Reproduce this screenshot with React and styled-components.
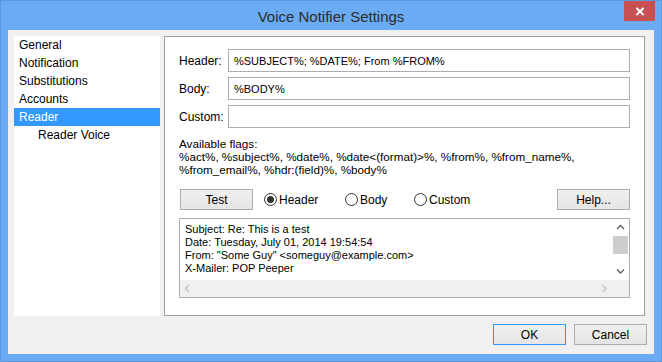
import styled, { createGlobalStyle } from 'styled-components'

const GlobalStyle = createGlobalStyle`
  html, body {
    margin: 0;
    padding: 0;
    width: 662px;
    height: 362px;
    overflow: hidden;
    background: #6aabf3;
  }
  body {
    font-family: 'Liberation Sans', Arial, sans-serif;
    font-size: 12px;
    color: #000;
  }
  * { box-sizing: border-box; }
`

const Window = styled.div`
  width: 662px;
  height: 362px;
  background: #6aabf3;
  border: 1px solid #5b98de;
  display: flex;
  flex-direction: column;
`

const TitleBar = styled.div`
  position: relative;
  height: 30px;
  display: flex;
  align-items: center;
  justify-content: center;
  font-size: 15px;
  color: #2b2b2b;
  padding-top: 1px;
`

const CloseButton = styled.div`
  position: absolute;
  top: 0;
  right: 6px;
  width: 31px;
  height: 20px;
  background: #c75050;
  display: flex;
  align-items: center;
  justify-content: center;
`

const Client = styled.div`
  flex: 1;
  margin: 0 7px 7px 7px;
  background: #f0f0f0;
  padding: 6px 7px 9px 6px;
  display: flex;
  flex-direction: column;
`

const Main = styled.div`
  display: flex;
  gap: 4px;
  height: 280px;
  margin-right: 2px;
`

const Tree = styled.div`
  width: 146px;
  background: #fff;
  display: flex;
  flex-direction: column;
`

const TreeItem = styled.div`
  height: 18px;
  line-height: 18px;
  padding-top: 1px;
  line-height: 17px;
  padding-left: ${p => (p.$indent ? 24 : 5)}px;
  background: ${p => (p.$selected ? '#3399ff' : 'transparent')};
  color: ${p => (p.$selected ? '#fff' : '#000')};
  white-space: nowrap;
`

const Panel = styled.div`
  flex: 1;
  background: #fff;
  border: 1px solid #a0a0a0;
  padding: 12px 14px 0 14px;
  display: flex;
  flex-direction: column;
`

const Form = styled.div`
  display: grid;
  grid-template-columns: 49px 1fr;
  row-gap: 5px;
  align-items: center;
`

const Label = styled.div`
  white-space: nowrap;
`

const TextInput = styled.div`
  height: 23px;
  border: 1px solid #abadb3;
  padding: 0 5px;
  display: flex;
  align-items: center;
  white-space: nowrap;
  font-size: 11px;
`

const Flags = styled.div`
  margin-top: 9px;
  line-height: 13px;
  font-size: 11.7px;
`

const ActionRow = styled.div`
  margin-top: 13px;
  display: flex;
  align-items: center;
  height: 21px;
`

const Button = styled.div`
  width: 73px;
  height: 21px;
  border: 1px solid ${p => (p.$default ? '#3399ff' : '#acacac')};
  background: linear-gradient(#f0f0f0, #e5e5e5);
  display: flex;
  align-items: center;
  justify-content: center;
  margin-left: ${p => p.$ml || 0};
`

const RadioItem = styled.div`
  width: ${p => p.$w}px;
  display: flex;
  align-items: center;
  gap: 2px;
  flex: none;
`

const RadioCircle = styled.span`
  width: 13px;
  height: 13px;
  border-radius: 50%;
  border: 1px solid #333;
  background: #fff;
  display: flex;
  align-items: center;
  justify-content: center;
  &::after {
    content: '';
    width: 7px;
    height: 7px;
    border-radius: 50%;
    background: ${p => (p.$checked ? '#333' : 'transparent')};
  }
`

const Preview = styled.div`
  margin-top: 8px;
  height: 80px;
  border: 1px solid #abadb3;
  display: grid;
  grid-template-columns: 1fr 17px;
  grid-template-rows: 1fr 17px;
`

const PreviewText = styled.div`
  padding: 4px 5px;
  line-height: 13px;
  font-size: 11px;
  white-space: nowrap;
  overflow: hidden;
`

const VScroll = styled.div`
  background: #fff;
  display: flex;
  flex-direction: column;
`

const ScrollArrow = styled.div`
  height: 17px;
  flex: none;
  display: flex;
  align-items: center;
  justify-content: center;
`

const Track = styled.div`
  flex: 1;
  display: flex;
  flex-direction: column;
  align-items: center;
`

const Thumb = styled.div`
  width: 15px;
  height: 18px;
  background: #cdcdcd;
`

const HScroll = styled.div`
  background: #f0f0f0;
  display: flex;
  justify-content: space-between;
  align-items: center;
  padding: 0 4px;
`

const Corner = styled.div`
  background: #f0f0f0;
`

const Footer = styled.div`
  margin-top: 8px;
  display: flex;
  justify-content: flex-end;
  gap: 8px;
`

function Chevron({ dir, color }) {
  const pts = {
    up: '1,5 4.5,1.5 8,5',
    down: '1,1.5 4.5,5 8,1.5',
    left: '5,1 1.5,4.5 5,8',
    right: '1.5,1 5,4.5 1.5,8',
  }[dir]
  const vertical = dir === 'up' || dir === 'down'
  return (
    <svg width={vertical ? 9 : 7} height={vertical ? 7 : 9}>
      <polyline points={pts} fill="none" stroke={color} strokeWidth="1.4" />
    </svg>
  )
}

export default function App() {
  return (
    <>
      <GlobalStyle />
      <Window>
        <TitleBar>
          Voice Notifier Settings
          <CloseButton>
            <svg width="10" height="9">
              <path d="M1.5 1 L8.5 8 M8.5 1 L1.5 8" stroke="#fff" strokeWidth="2" />
            </svg>
          </CloseButton>
        </TitleBar>
        <Client>
          <Main>
            <Tree>
              <TreeItem>General</TreeItem>
              <TreeItem>Notification</TreeItem>
              <TreeItem>Substitutions</TreeItem>
              <TreeItem>Accounts</TreeItem>
              <TreeItem $selected>Reader</TreeItem>
              <TreeItem $indent>Reader Voice</TreeItem>
            </Tree>
            <Panel>
              <Form>
                <Label>Header:</Label>
                <TextInput>%SUBJECT%; %DATE%; From %FROM%</TextInput>
                <Label>Body:</Label>
                <TextInput>%BODY%</TextInput>
                <Label>Custom:</Label>
                <TextInput />
              </Form>
              <Flags>
                Available flags:
                <br />
                %act%, %subject%, %date%, %date&lt;(format)&gt;%, %from%, %from_name%,
                <br />
                %from_email%, %hdr:(field)%, %body%
              </Flags>
              <ActionRow>
                <Button $ml="1px">Test</Button>
                <RadioItem $w={81} style={{ marginLeft: 11 }}>
                  <RadioCircle $checked />
                  Header
                </RadioItem>
                <RadioItem $w={69}>
                  <RadioCircle />
                  Body
                </RadioItem>
                <RadioItem $w={80}>
                  <RadioCircle />
                  Custom
                </RadioItem>
                <Button $ml="auto">Help...</Button>
              </ActionRow>
              <Preview>
                <PreviewText>
                  Subject: Re: This is a test
                  <br />
                  Date: Tuesday, July 01, 2014 19:54:54
                  <br />
                  From: "Some Guy" &lt;someguy@example.com&gt;
                  <br />
                  X-Mailer: POP Peeper
                </PreviewText>
                <VScroll>
                  <ScrollArrow>
                    <Chevron dir="up" color="#606060" />
                  </ScrollArrow>
                  <Track>
                    <Thumb />
                  </Track>
                  <ScrollArrow>
                    <Chevron dir="down" color="#606060" />
                  </ScrollArrow>
                </VScroll>
                <HScroll>
                  <Chevron dir="left" color="#c4c4c4" />
                  <Chevron dir="right" color="#c4c4c4" />
                </HScroll>
                <Corner />
              </Preview>
            </Panel>
          </Main>
          <Footer>
            <Button $default>OK</Button>
            <Button>Cancel</Button>
          </Footer>
        </Client>
      </Window>
    </>
  )
}
